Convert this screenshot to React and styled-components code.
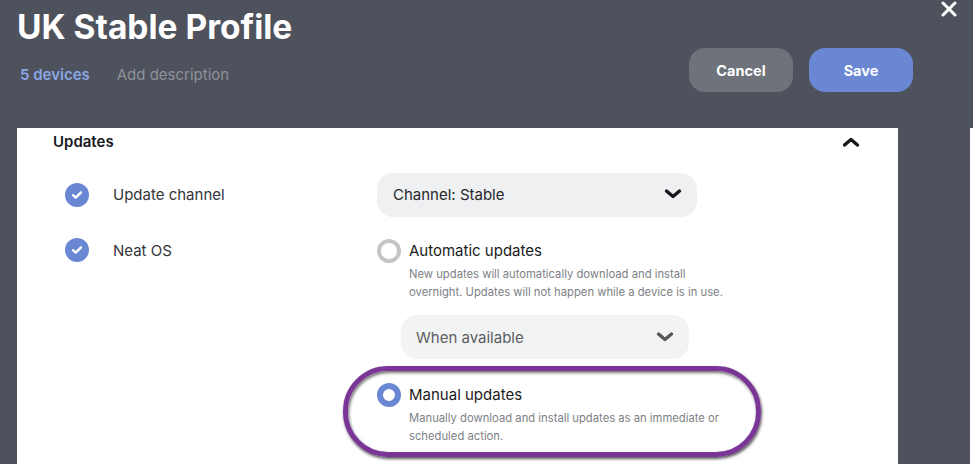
import React from 'react';
import styled, { createGlobalStyle } from 'styled-components';

const GlobalStyle = createGlobalStyle`
  html, body {
    margin: 0;
    padding: 0;
    background: #4e525d;
    font-family: 'Inter', 'Liberation Sans', sans-serif;
  }
`;

const Page = styled.div`
  position: relative;
  width: 973px;
  height: 464px;
  overflow: hidden;
  background: #4e525d;
`;

const Header = styled.header`
  display: flex;
  justify-content: space-between;
  align-items: flex-start;
  height: 128px;
  padding: 0 60px 0 17px;
  box-sizing: border-box;
`;

const TitleBlock = styled.div`
  display: flex;
  flex-direction: column;
  padding-top: 8px;
`;

const Title = styled.h1`
  margin: 0;
  color: #fff;
  font-size: 33.5px;
  line-height: 38px;
  font-weight: 700;
`;

const Meta = styled.div`
  display: flex;
  gap: 27px;
  margin-top: 19px;
  padding-left: 3px;
  font-size: 15px;
  line-height: 20px;
`;

const Devices = styled.span`
  color: #8ba6e6;
  font-weight: 600;
`;

const Description = styled.span`
  color: #8e919a;
`;

const Actions = styled.div`
  display: flex;
  gap: 16px;
  margin-top: 48px;
`;

const Button = styled.button`
  width: 104px;
  height: 44px;
  border: 0;
  border-radius: 16px;
  background: ${(p) => (p.$primary ? '#6a87d3' : '#6e727b')};
  color: #fff;
  font-family: inherit;
  font-size: 14.5px;
  font-weight: 700;
`;

const Close = styled.svg`
  position: absolute;
  top: 1px;
  left: 941px;
  width: 16px;
  height: 16px;
`;

const Body = styled.div`
  display: flex;
  justify-content: space-between;
  height: 336px;
  padding-left: 17px;
`;

const Card = styled.section`
  width: 881px;
  height: 100%;
  background: #fff;
  box-sizing: border-box;
  padding: 0 38px 0 36px;
`;

const Sliver = styled.div`
  width: 3px;
  background: #fafafa;
`;

const SectionHead = styled.div`
  display: flex;
  justify-content: space-between;
  align-items: center;
  height: 27px;
  color: #17181c;
  font-size: 15px;
  font-weight: 600;
`;

const Row = styled.div`
  display: grid;
  grid-template-columns: 24px 264px 1fr;
  column-gap: 24px;
  padding-left: 12px;
  margin-top: ${(p) => p.$top}px;
`;

const CheckBadge = styled.span`
  display: flex;
  align-items: center;
  justify-content: center;
  width: 24px;
  height: 24px;
  margin-top: ${(p) => p.$offset || 0}px;
  border-radius: 50%;
  background: #6a87d3;
`;

const RowLabel = styled.div`
  color: #33353a;
  font-size: 15px;
  line-height: 24px;
  padding-top: ${(p) => p.$offset || 0}px;
`;

const Controls = styled.div`
  display: flex;
  flex-direction: column;
  margin-left: -24px;
`;

const Select = styled.div`
  display: flex;
  align-items: center;
  justify-content: space-between;
  box-sizing: border-box;
  height: 44px;
  width: ${(p) => p.$width}px;
  margin-left: ${(p) => p.$indent || 0}px;
  margin-top: ${(p) => p.$top || 0}px;
  padding: 0 15px ${(p) => (p.$muted ? 0 : 2)}px ${(p) => (p.$muted ? 15 : 16)}px;
  border-radius: 16px;
  background: ${(p) => (p.$muted ? '#f2f3f3' : '#eff0f1')};
  color: ${(p) => (p.$muted ? '#5b5d62' : '#26282c')};
  font-size: 15px;
`;

const Option = styled.div`
  display: grid;
  grid-template-columns: 24px 1fr;
  column-gap: 8px;
  margin-top: ${(p) => p.$top || 0}px;
`;

const Radio = styled.span`
  box-sizing: border-box;
  width: 24px;
  height: 24px;
  border-radius: 50%;
  background: #fff;
  border: ${(p) => (p.$checked ? '6px solid #6a87d3' : '4px solid #c4c5c7')};
`;

const OptionTitle = styled.div`
  color: #1b1c20;
  font-size: 15px;
  line-height: 24px;
`;

const OptionText = styled.div`
  grid-column: 2;
  margin-top: 3px;
  color: #7d7f85;
  font-size: 11.25px;
  line-height: 17.5px;
`;

const Highlight = styled.div`
  position: absolute;
  left: 343px;
  top: 366px;
  box-sizing: border-box;
  width: 418px;
  height: 91px;
  border: 5px solid #7a3596;
  border-radius: 45px;
  box-shadow: 1px 2px 3px rgba(0, 0, 0, 0.65), inset 1px 2px 3px rgba(0, 0, 0, 0.55);
`;

const Chevron = ({ up, color = '#17181c' }) => (
  <svg width="18" height="12" viewBox="0 0 18 12" fill="none">
    <path
      d={up ? 'M2.5 9 9 3.5 15.5 9' : 'M2.5 3 9 8.5 15.5 3'}
      stroke={color}
      strokeWidth="3.4"
      strokeLinecap="round"
      strokeLinejoin="round"
    />
  </svg>
);

const Check = () => (
  <svg width="12" height="10" viewBox="0 0 12 10" fill="none">
    <path d="M2 5.2 4.7 7.6 10 2.4" stroke="#fff" strokeWidth="2.4" strokeLinecap="round" strokeLinejoin="round" />
  </svg>
);

export default function App() {
  return (
    <Page>
      <GlobalStyle />
      <Header>
        <TitleBlock>
          <Title>UK Stable Profile</Title>
          <Meta>
            <Devices>5 devices</Devices>
            <Description>Add description</Description>
          </Meta>
        </TitleBlock>
        <Actions>
          <Button>Cancel</Button>
          <Button $primary>Save</Button>
        </Actions>
      </Header>
      <Close viewBox="0 0 16 16" fill="none">
        <path d="M2 2l12 12M14 2 2 14" stroke="#fff" strokeWidth="3" strokeLinecap="round" />
      </Close>
      <Body>
        <Card>
          <SectionHead>
            <span>Updates</span>
            <Chevron up />
          </SectionHead>
          <Row $top={18}>
            <CheckBadge $offset={10}><Check /></CheckBadge>
            <RowLabel $offset={10}>Update channel</RowLabel>
            <Controls>
              <Select $width={320}>
                Channel: Stable
                <Chevron />
              </Select>
            </Controls>
          </Row>
          <Row $top={22}>
            <CheckBadge $offset={-1}><Check /></CheckBadge>
            <RowLabel $offset={-1}>Neat OS</RowLabel>
            <Controls>
              <Option>
                <Radio />
                <OptionTitle>Automatic updates</OptionTitle>
                <OptionText>
                  New updates will automatically download and install
                  <br />
                  overnight. Updates will not happen while a device is in use.
                </OptionText>
              </Option>
              <Select $muted $width={288} $indent={24} $top={14}>
                When available
                <Chevron color="#55575c" />
              </Select>
              <Option $top={24}>
                <Radio $checked />
                <OptionTitle>Manual updates</OptionTitle>
                <OptionText>
                  Manually download and install updates as an immediate or
                  <br />
                  scheduled action.
                </OptionText>
              </Option>
            </Controls>
          </Row>
        </Card>
        <Sliver />
      </Body>
      <Highlight />
    </Page>
  );
}
